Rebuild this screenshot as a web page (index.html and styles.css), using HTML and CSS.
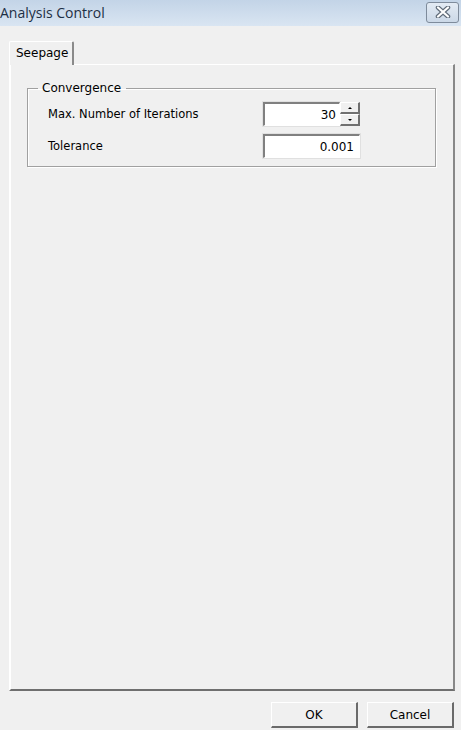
FILE: index.html
```html
<!DOCTYPE html>
<html lang="en">
<head>
  <meta charset="UTF-8">
  <title>Analysis Control</title>
  <link rel="stylesheet" href="styles.css">
</head>
<body>
  <div class="window">
    <header class="titlebar">
      <span class="title">Analysis Control</span>
      <button class="close" aria-label="Close">
        <svg width="16" height="12" viewBox="0 0 16 12">
          <path d="M3 1.5L13 10.5M13 1.5L3 10.5" stroke="#5f6b78" stroke-width="4.5" stroke-linecap="round"/>
          <path d="M3 1.5L13 10.5M13 1.5L3 10.5" stroke="#ffffff" stroke-width="2.2" stroke-linecap="round"/>
        </svg>
      </button>
    </header>

    <div class="content">
      <div class="tabs">
        <div class="tab active">Seepage</div>
      </div>
      <div class="panel">
        <fieldset class="group">
          <legend>Convergence</legend>
          <div class="row">
            <label for="iter">Max. Number of Iterations</label>
            <div class="spin">
              <input id="iter" class="field" value="30">
              <div class="spin-buttons">
                <span class="spin-btn"><i class="arrow up"></i></span>
                <span class="spin-btn"><i class="arrow down"></i></span>
              </div>
            </div>
          </div>
          <div class="row">
            <label for="tol">Tolerance</label>
            <input id="tol" class="field wide" value="0.001">
          </div>
        </fieldset>
      </div>

      <footer class="actions">
        <button class="btn">OK</button>
        <button class="btn">Cancel</button>
      </footer>
    </div>
  </div>
</body>
</html>
```

FILE: styles.css
```css
* {
  margin: 0;
  padding: 0;
  box-sizing: border-box;
}

body {
  font-family: "DejaVu Sans", "Liberation Sans", sans-serif;
  font-size: 11px;
  color: #000;
  background: #f0f0f0;
  width: 461px;
  height: 730px;
  overflow: hidden;
}

.window {
  display: flex;
  flex-direction: column;
  height: 730px;
}

.titlebar {
  height: 26px;
  display: flex;
  align-items: center;
  justify-content: space-between;
  background: linear-gradient(to bottom, #c3d4e7, #d9e5f2);
  padding-right: 2px;
}

.title {
  font-family: "Open Sans", "DejaVu Sans", sans-serif;
  font-size: 14px;
  color: #1d2f44;
  margin-top: -1px;
}

.close {
  width: 33px;
  height: 21px;
  margin-top: -2px;
  border: 1px solid #7e8b9b;
  border-radius: 3px;
  background: linear-gradient(to bottom, #e3ebf4, #cbd8e7);
  display: flex;
  align-items: center;
  justify-content: center;
}

.content {
  flex: 1;
  display: flex;
  flex-direction: column;
  padding: 15px 6px 0 9px;
}

.tabs {
  display: flex;
  height: 23px;
}

.tab {
  padding: 4px 6px 0 6px;
  width: 65px;
  height: 24px;
  background: #f0f0f0;
  border-top: 1px solid #fff;
  border-left: 1px solid #fff;
  border-right: 2px solid #8a8a8a;
  border-radius: 2px 2px 0 0;
  font-size: 12px;
  position: relative;
  z-index: 1;
}

.panel {
  height: 627px;
  border-top: 1px solid #fff;
  border-left: 2px solid #fff;
  border-right: 2px solid #888;
  border-bottom: 2px solid #6f6f6f;
  padding: 16px 17px 0 16px;
}

.group {
  border: 1px solid #a0a0a0;
  box-shadow: 1px 1px 0 #fff, inset 1px 1px 0 #fff;
  padding: 3px 0 8px 20px;
  height: 86px;
}

.group legend {
  font-size: 12px;
  padding: 0 5px 0 4px;
  margin-left: -10px;
}

.row {
  display: flex;
  align-items: center;
  height: 32px;
}

.row label {
  width: 215px;
  font-size: 11.5px;
}

.spin {
  display: flex;
}

.field {
  width: 77px;
  height: 24px;
  border-top: 2px solid #808080;
  border-left: 2px solid #808080;
  border-right: 1px solid #fff;
  border-bottom: 1px solid #fff;
  outline: 1px solid #e0e0e0;
  background: #fff;
  font-family: inherit;
  font-size: 12px;
  text-align: right;
  padding-right: 3px;
}

.field.wide {
  width: 97px;
  padding-right: 5px;
}

.spin-buttons {
  display: flex;
  flex-direction: column;
  width: 20px;
  height: 24px;
}

.spin-btn {
  flex: 1;
  background: #f0f0f0;
  border-top: 1px solid #fff;
  border-left: 1px solid #fff;
  border-right: 2px solid #707070;
  border-bottom: 2px solid #707070;
  display: flex;
  align-items: center;
  justify-content: center;
}

.arrow {
  width: 0;
  height: 0;
  border-left: 2px solid transparent;
  border-right: 2px solid transparent;
}

.arrow.up {
  border-bottom: 2px solid #000;
}

.arrow.down {
  border-top: 2px solid #000;
}

.actions {
  display: flex;
  justify-content: flex-end;
  gap: 9px;
  padding: 11px 1px 0 0;
}

.btn {
  width: 87px;
  height: 26px;
  background: #f0f0f0;
  border-top: 1px solid #fff;
  border-left: 1px solid #fff;
  border-right: 2px solid #6a6a6a;
  border-bottom: 2px solid #6a6a6a;
  font-family: inherit;
  font-size: 12px;
  color: #000;
}
```
